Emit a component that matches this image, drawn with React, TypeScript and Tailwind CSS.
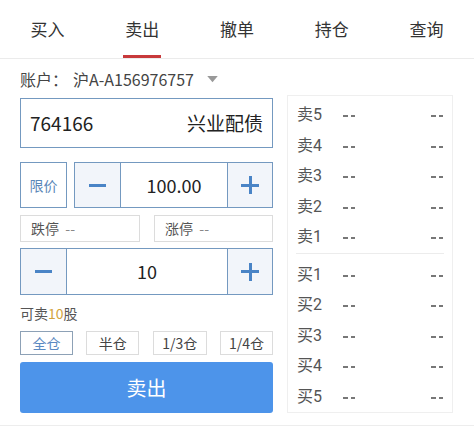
import React from "react";

const FONT = { fontFamily: '"Noto Sans CJK SC", "Noto Sans", Roboto, sans-serif' };

function Minus() {
  return <div className="w-[17px] h-[3px] bg-[#4a84c6]" />;
}
function Plus() {
  return (
    <div className="relative w-[18px] h-[18px]">
      <div className="absolute left-0 top-[7.5px] w-[18px] h-[3px] bg-[#4a84c6]" />
      <div className="absolute top-0 left-[7.5px] w-[3px] h-[18px] bg-[#4a84c6]" />
    </div>
  );
}

function Dash() {
  return (
    <div className="flex gap-[3px] w-[12px]">
      <div className="w-[5px] h-[2px] bg-[#777]" />
      <div className="w-[5px] h-[2px] bg-[#777]" />
    </div>
  );
}

export default function App() {
  const tabs = ["买入", "卖出", "撤单", "持仓", "查询"];
  const sells = ["卖5", "卖4", "卖3", "卖2", "卖1"];
  const buys = ["买1", "买2", "买3", "买4", "买5"];
  const Row = ({ s }: { s: string }) => (
    <div className="h-[30.5px] flex items-center pl-[9px] pr-[9px] text-[16px]">
      <span className="w-[46px] text-[#555]">{s}</span>
      <div className="flex-1 flex items-center mt-[2px]"><Dash /></div>
      <div className="mt-[2px]"><Dash /></div>
    </div>
  );
  return (
    <div className="w-[474px] h-[428px] bg-white overflow-hidden text-[#333]" style={FONT}>
      <div className="h-[59px] flex border-b border-[#ebebeb]">
        {tabs.map((t, i) => (
          <div key={t} className="flex-1 relative flex items-center justify-center">
            <span className="text-[17px] text-[#333] leading-none mb-[2px]">{t}</span>
            {i === 1 && <div className="absolute bottom-0 left-1/2 -translate-x-1/2 w-[38px] h-[3px] bg-[#c8393b]" />}
          </div>
        ))}
      </div>
      <div className="flex pl-[20px]">
        <div className="w-[253px] flex flex-col">
          <div className="h-[39px] flex items-center text-[16px] text-[#444]">
            <span>账户：</span>
            <span className="ml-[5px]">沪A-A156976757</span>
            <svg width="11" height="7" viewBox="0 0 12 8" className="ml-[13px] mt-[2px]">
              <path d="M0 0 L12 0 L6 7 Z" fill="#999" />
            </svg>
          </div>
          <div className="h-[50px] border border-[#7499c0] flex items-center justify-between px-[9px]">
            <span className="text-[19px] text-[#222]">764166</span>
            <span className="text-[19px] text-[#222]">兴业配债</span>
          </div>
          <div className="h-[46px] mt-[14px] flex gap-[7px]">
            <div className="w-[47px] border border-[#7499c0] flex items-center justify-center text-[14px] text-[#5b87b8]">限价</div>
            <div className="flex-1 flex border border-[#7499c0]">
              <div className="w-[46px] bg-[#f2f5fa] border-r border-[#7499c0] flex items-center justify-center"><Minus /></div>
              <div className="flex-1 flex items-center justify-center text-[18px] text-[#222]">100.00</div>
              <div className="w-[45px] bg-[#f2f5fa] border-l border-[#7499c0] flex items-center justify-center"><Plus /></div>
            </div>
          </div>
          <div className="h-[27px] mt-[7px] flex justify-between">
            <div className="w-[120px] border border-[#dcdcdc] flex items-center pl-[10px] text-[14px] text-[#555]">跌停&nbsp;&nbsp;<span className="text-[#888]">--</span></div>
            <div className="w-[119px] border border-[#dcdcdc] flex items-center pl-[10px] text-[14px] text-[#555]">涨停&nbsp;&nbsp;<span className="text-[#888]">--</span></div>
          </div>
          <div className="h-[47px] mt-[6px] flex border border-[#7499c0]">
            <div className="w-[46px] bg-[#f2f5fa] border-r border-[#7499c0] flex items-center justify-center"><Minus /></div>
            <div className="flex-1 flex items-center justify-center text-[18px] text-[#222]">10</div>
            <div className="w-[45px] bg-[#f2f5fa] border-l border-[#7499c0] flex items-center justify-center"><Plus /></div>
          </div>
          <div className="h-[36px] flex items-center text-[14px] text-[#555] pt-[1px]">
            可卖<span className="text-[#d2a33c]">10</span>股
          </div>
          <div className="h-[24px] flex justify-between text-[14px]">
            <div className="w-[53px] border border-[#8da1b6] flex items-center justify-center text-[#5b8ac2]">全仓</div>
            <div className="w-[53px] border border-[#dcdcdc] flex items-center justify-center text-[#444]">半仓</div>
            <div className="w-[54px] border border-[#dcdcdc] flex items-center justify-center text-[#444]">1/3仓</div>
            <div className="w-[53px] border border-[#dcdcdc] flex items-center justify-center text-[#444]">1/4仓</div>
          </div>
          <div className="h-[51px] mt-[7px] rounded-[3px] bg-[#4d94ea] flex items-center justify-center text-white text-[20px]">卖出</div>
        </div>
        <div className="ml-[14px] mt-[36px] w-[166px] h-[318px] border border-[#efefef] flex flex-col" style={{ fontFamily: 'Roboto, "Noto Sans CJK SC", sans-serif' }}>
          <div className="pt-[4px]">
            {sells.map((s) => <Row key={s} s={s} />)}
          </div>
          <div className="mx-[8px] border-t border-[#ececec]" />
          <div className="pt-[6px]">
            {buys.map((s) => <Row key={s} s={s} />)}
          </div>
        </div>
      </div>
      <div className="mt-[12px] border-t border-[#ededed]" />
    </div>
  );
}
